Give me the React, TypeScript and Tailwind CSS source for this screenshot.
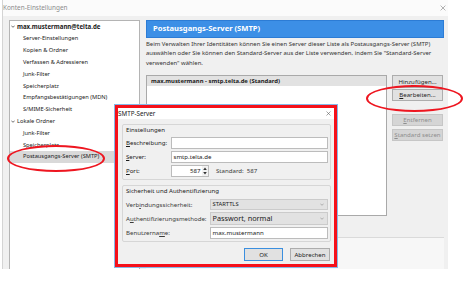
import React from 'react';

const Chevron = () => (
  <svg width="4" height="3" viewBox="0 0 4 3" className="shrink-0">
    <polyline points="0.3,0.6 2,2.3 3.7,0.6" fill="none" stroke="#4a4a4a" strokeWidth="0.8" />
  </svg>
);

const Cross = ({ size, color }: { size: number; color: string }) => (
  <svg width={size} height={size} viewBox="0 0 10 10" className="shrink-0">
    <path d="M1 1 L9 9 M9 1 L1 9" stroke={color} strokeWidth="1.1" />
  </svg>
);

const treeRows = [
  { label: 'max.mustermann@telta.de', level: 0 },
  { label: 'Server-Einstellungen', level: 1 },
  { label: 'Kopien & Ordner', level: 1 },
  { label: 'Verfassen & Adressieren', level: 1 },
  { label: 'Junk-Filter', level: 1 },
  { label: 'Speicherplatz', level: 1 },
  { label: 'Empfangsbestätigungen (MDN)', level: 1 },
  { label: 'S/MIME-Sicherheit', level: 1 },
  { label: 'Lokale Ordner', level: 0 },
  { label: 'Junk-Filter', level: 1 },
  { label: 'Speicherplatz', level: 1 },
  { label: 'Postausgangs-Server (SMTP)', level: 1, selected: true }
];

const SideButton = ({ children, disabled = false, className = '' }: { children: React.ReactNode; disabled?: boolean; className?: string }) => (
  <div className={`h-[12.5px] flex items-center justify-center border ${disabled ? 'bg-[#d5d5d5] border-[#c6c6c6] text-[#8e8e8e]' : 'bg-[#e1e1e1] border-[#adadad] text-[#1e1e1e]'} ${className}`}>
    {children}
  </div>
);

const TextBox = ({ value = '', className = '' }: { value?: string; className?: string }) => (
  <div className={`bg-white border border-[#bcbcbc] flex items-center pl-[1.5px] ${className}`}>{value}</div>
);

const Select = ({ value, className = '', textClass = '' }: { value: string; className?: string; textClass?: string }) => (
  <div className={`bg-[#e2e2e2] border border-[#cbcbcb] flex items-center justify-between pl-[1.5px] pr-[3px] ${className}`}>
    <span className={textClass}>{value}</span>
    <svg width="4" height="3" viewBox="0 0 4 3">
      <polyline points="0.3,0.6 2,2.3 3.7,0.6" fill="none" stroke="#8a8a8a" strokeWidth="0.6" />
    </svg>
  </div>
);

export default function App() {
  return (
    <div className="relative w-[466px] h-[298px] overflow-hidden bg-white font-['Noto_Sans',sans-serif] text-[6.1px] text-[#1a1a1a]">
      {/* main window */}
      <div className="ml-[2px] w-[446px] h-[269px] flex flex-col bg-[#f0f0f0] border-l border-[#d4d4d4]">
        <div className="h-[16px] shrink-0 flex items-center justify-between bg-[#fbfbfb] pr-[2px]">
          <span className="text-[6.4px] text-[#8c8c8c]">Konten-Einstellungen</span>
          <Cross size={6} color="#8a8a8a" />
        </div>
        <div className="flex-1 min-h-0 flex pt-[4px] pl-[6px] gap-[6px]">
          {/* account tree */}
          <div className="w-[131px] h-full bg-white border border-b-0 border-[#b4b4b4]">
            {treeRows.map((row, i) => (
              <div
                key={i}
                className={`h-[11.8px] flex items-center gap-[2px] ${row.level === 0 ? 'pl-[1px]' : 'pl-[13px]'} ${row.selected ? 'bg-[#d9d9d9]' : ''}`}
              >
                {row.level === 0 && <Chevron />}
                <span className={i === 0 ? 'font-bold text-[6.1px]' : 'text-[5.7px]'}>{row.label}</span>
              </div>
            ))}
          </div>

          {/* right panel */}
          <div className="w-[298px] flex flex-col">
            <div className="h-[18px] shrink-0 flex items-center pl-[6px] bg-[#3c8fe6] border border-[#2c7cd5] text-white font-bold text-[7.6px]">
              Postausgangs-Server (SMTP)
            </div>
            <div className="mt-[1.75px] leading-[9.5px] text-[5.95px] text-[#333] whitespace-nowrap">
              <div>Beim Verwalten Ihrer Identitäten können Sie einen Server dieser Liste als Postausgangs-Server (SMTP)</div>
              <div>auswählen oder Sie können den Standard-Server aus der Liste verwenden, indem Sie "Standard-Server</div>
              <div>verwenden" wählen.</div>
            </div>
            <div className="mt-[6.75px] flex gap-[5px]">
              <div className="w-[241px] h-[141px] bg-white border border-[#a9a9a9]">
                <div className="h-[10px] flex items-center pl-[4px] bg-[#e2e2e2] font-bold text-[5.9px]">
                  max.mustermann - smtp.telta.de (Standard)
                </div>
              </div>
              <div className="w-[51px] flex flex-col">
                <SideButton>Hinz<u>u</u>fügen...</SideButton>
                <SideButton className="mt-[1px]"><u>B</u>earbeiten...</SideButton>
                <SideButton disabled className="mt-[12.5px]"><u>E</u>ntfernen</SideButton>
                <SideButton disabled className="mt-[2.5px]"><u>S</u>tandard setzen</SideButton>
              </div>
            </div>
            <div className="mt-[21px] flex-1 border-t border-[#dadada] bg-[#f7f7f7]" />
          </div>
        </div>
      </div>

      {/* SMTP server dialog */}
      <div className="absolute left-[114px] top-[104px] w-[224px] h-[164px] border border-[#86b8e8]">
        <div className="w-full h-full border-[3px] border-[#f5101a] flex flex-col bg-[#f0f0f0]">
          <div className="h-[11px] shrink-0 bg-white flex items-center justify-between pr-[3px]">
            <span className="text-[6.3px] text-[#222]">SMTP-Server</span>
            <Cross size={5} color="#555" />
          </div>
          <div className="flex-1 pt-[5px] pl-[4px] pr-[3px] flex flex-col">
            <div className="h-[56px] border border-[#d6d6d6] rounded-[2px] pl-[3px] pr-[2px] pt-[0.5px] flex flex-col">
              <div className="h-[8px] flex items-center">Einstellungen</div>
              <div className="mt-[3.5px] h-[12px] flex items-center">
                <div className="w-[45px]"><u>B</u>eschreibung:</div>
                <TextBox className="flex-1 h-[12px]" />
              </div>
              <div className="mt-[2px] h-[12px] flex items-center">
                <div className="w-[45px]"><u>S</u>erver:</div>
                <TextBox className="flex-1 h-[12px]" value="smtp.telta.de" />
              </div>
              <div className="mt-[2px] h-[12px] flex items-center">
                <div className="w-[45px]"><u>P</u>ort:</div>
                <div className="w-[38px] h-[12px] bg-white border border-[#bcbcbc] flex items-center justify-end">
                  <span className="pr-[1.5px]">587</span>
                  <svg width="6" height="10" viewBox="0 0 6 10" className="shrink-0">
                    <rect x="0" y="0" width="6" height="10" fill="#f2f2f2" />
                    <polygon points="1.2,4 3,1.6 4.8,4" fill="#333" />
                    <polygon points="1.2,6 3,8.4 4.8,6" fill="#333" />
                  </svg>
                </div>
                <span className="ml-[7px] text-[#3a3a3a]">Standard:</span>
                <span className="ml-[3px] text-[#3a3a3a]">587</span>
              </div>
            </div>
            <div className="mt-[5px] h-[57px] border border-[#d6d6d6] rounded-[2px] pl-[3px] pr-[2px] pt-[1px] flex flex-col">
              <div className="h-[8px] flex items-center">Sicherheit und Authentifizierung</div>
              <div className="mt-[4px] h-[11px] flex items-center">
                <div className="w-[84px] text-[#3a3a3a]">Verb<u>i</u>ndungssicherheit:</div>
                <Select className="flex-1 h-[11px]" value="STARTTLS" textClass="text-[5.8px]" />
              </div>
              <div className="mt-[2px] h-[13px] flex items-center">
                <div className="w-[84px] text-[#3a3a3a]">A<u>u</u>thentifizierungsmethode:</div>
                <Select className="flex-1 h-[13px]" value="Passwort, normal" textClass="text-[7.3px]" />
              </div>
              <div className="mt-[2px] h-[11.5px] flex items-center">
                <div className="w-[84px] text-[#3a3a3a]">Benutzerna<u>m</u>e:</div>
                <TextBox className="flex-1 h-[11.5px]" value="max.mustermann" />
              </div>
            </div>
            <div className="mt-[6px] flex justify-end gap-[7px] pr-[1px]">
              <div className="w-[39px] h-[13px] flex items-center justify-center bg-[#e1e1e1] border border-[#3b8fdf]">OK</div>
              <div className="w-[40px] h-[13px] flex items-center justify-center bg-[#e1e1e1] border border-[#adadad]">Abbrechen</div>
            </div>
          </div>
        </div>
      </div>

      {/* red annotation ellipses */}
      <div className="absolute left-[7px] top-[145px] w-[98px] h-[27px] rounded-[50%] border-2 border-[#ee1620]" />
      <div className="absolute left-[366px] top-[85px] w-[97px] h-[27px] rounded-[50%] border-2 border-[#ee1620]" />
    </div>
  );
}
